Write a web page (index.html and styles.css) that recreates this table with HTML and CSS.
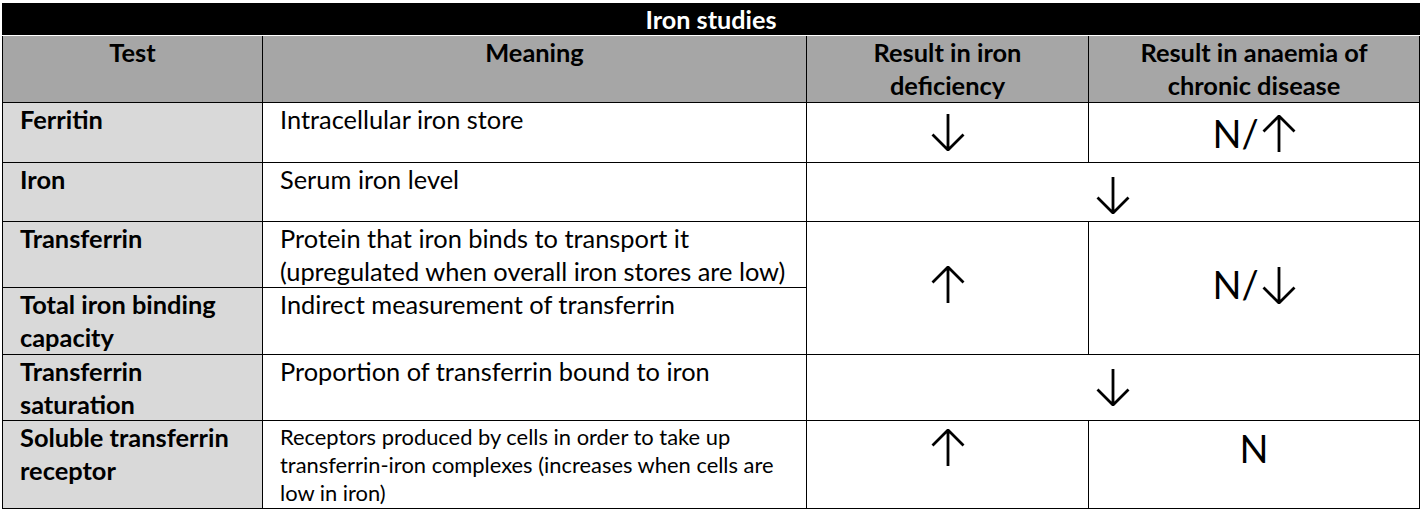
FILE: index.html
```html
<!DOCTYPE html>
<html lang="en">
<head>
<meta charset="utf-8">
<title>Iron studies</title>
<link rel="stylesheet" href="styles.css">
</head>
<body>
<div class="sheet">
  <div class="title">Iron studies</div>
  <div class="grid">
    <div class="cell head">Test</div>
    <div class="cell head">Meaning</div>
    <div class="cell head">Result in iron<br>deficiency</div>
    <div class="cell head">Result in anaemia of<br>chronic disease</div>

    <div class="cell test">Ferritin</div>
    <div class="cell meaning">Intracellular iron store</div>
    <div class="cell value"><svg class="arr" viewBox="0 0 34 37" width="34" height="37"><path d="M17 0V36M1.5 20.5L17 36L32.5 20.5"/></svg></div>
    <div class="cell value"><span class="sym">N/</span><svg class="arr inl" viewBox="0 0 34 37" width="34" height="37"><path d="M17 37V1M1.5 16.5L17 1L32.5 16.5"/></svg></div>

    <div class="cell test">Iron</div>
    <div class="cell meaning">Serum iron level</div>
    <div class="cell value span2 low"><svg class="arr" viewBox="0 0 34 37" width="34" height="37"><path d="M17 0V36M1.5 20.5L17 36L32.5 20.5"/></svg></div>

    <div class="cell test">Transferrin</div>
    <div class="cell meaning">Protein that iron binds to transport it<br>(upregulated when overall iron stores are low)</div>
    <div class="cell value rows2 high"><svg class="arr" viewBox="0 0 34 37" width="34" height="37"><path d="M17 37V1M1.5 16.5L17 1L32.5 16.5"/></svg></div>
    <div class="cell value rows2 high"><span class="sym">N/</span><svg class="arr inl" viewBox="0 0 34 37" width="34" height="37"><path d="M17 0V36M1.5 20.5L17 36L32.5 20.5"/></svg></div>

    <div class="cell test">Total iron binding<br>capacity</div>
    <div class="cell meaning">Indirect measurement of transferrin</div>

    <div class="cell test">Transferrin<br>saturation</div>
    <div class="cell meaning">Proportion of transferrin bound to iron</div>
    <div class="cell value span2"><svg class="arr" viewBox="0 0 34 37" width="34" height="37"><path d="M17 0V36M1.5 20.5L17 36L32.5 20.5"/></svg></div>

    <div class="cell test">Soluble transferrin<br>receptor</div>
    <div class="cell meaning small">Receptors produced by cells in order to take up<br>transferrin-iron complexes (increases when cells are<br>low in iron)</div>
    <div class="cell value top"><svg class="arr" viewBox="0 0 34 37" width="34" height="37"><path d="M17 37V1M1.5 16.5L17 1L32.5 16.5"/></svg></div>
    <div class="cell value top top-n"><span class="sym">N</span></div>
  </div>
</div>
</body>
</html>
```
FILE: styles.css
```css
body {
  margin: 0;
  background: #ffffff;
  font-family: "Lato", "Liberation Sans", sans-serif;
  color: #000000;
}

.sheet {
  width: 1418px;
  margin: 3px 0 0 2px;
}

.title {
  height: 32px;
  margin-bottom: 1px;
  background: #000000;
  color: #ffffff;
  font-size: 25.2px;
  font-weight: 700;
  line-height: 32px;
  text-align: center;
}

.grid {
  display: grid;
  grid-template-columns: 259px 543px 281px 330px;
  grid-template-rows: 66px 59px 58px 65px 66px 65px 87px;
  gap: 1px;
  padding: 0 1px 1px;
  background: #000000;
}

.cell {
  background: #ffffff;
  font-size: 25.4px;
  line-height: 33px;
  white-space: nowrap;
  overflow: hidden;
}

.head {
  background: #a6a6a6;
  font-weight: 700;
  text-align: center;
}

.test {
  background: #d9d9d9;
  font-weight: 700;
  padding-left: 17px;
}

.meaning {
  padding-left: 17px;
}

.small {
  font-size: 21.9px;
  line-height: 28px;
  padding-top: 2px;
}

.value {
  display: flex;
  align-items: center;
  justify-content: center;
}

.span2 {
  grid-column: span 2;
}

.rows2 {
  grid-row: span 2;
}

.low {
  padding-top: 6px;
}

.high {
  padding-bottom: 8px;
}

.top {
  align-items: flex-start;
  padding-top: 8px;
}

.top-n {
  padding-top: 7px;
}

.sym {
  font-size: 38px;
  line-height: 40px;
}

.arr {
  display: block;
  flex: none;
}

.arr path {
  fill: none;
  stroke: #000000;
  stroke-width: 2.8;
}

.arr.inl {
  margin-left: 3px;
  margin-top: 2px;
}
```
